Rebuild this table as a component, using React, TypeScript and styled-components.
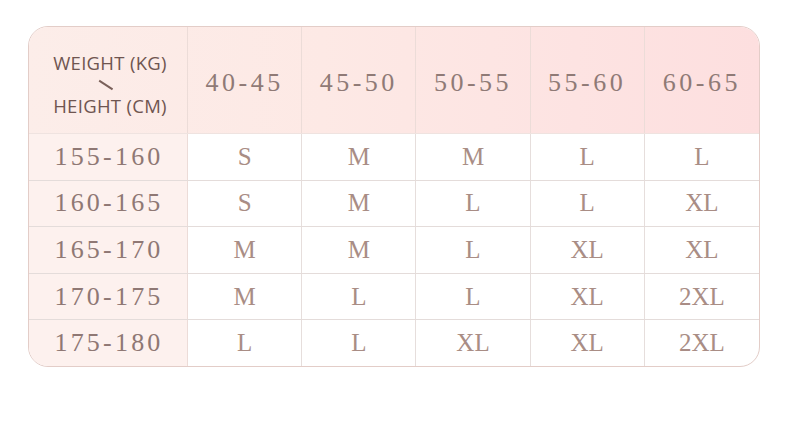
import React from 'react';
import styled, { createGlobalStyle } from 'styled-components';

const weights = ['40-45', '45-50', '50-55', '55-60', '60-65'];

const rows: { height: string; sizes: string[] }[] = [
	{ height: '155-160', sizes: ['S', 'M', 'M', 'L', 'L'] },
	{ height: '160-165', sizes: ['S', 'M', 'L', 'L', 'XL'] },
	{ height: '165-170', sizes: ['M', 'M', 'L', 'XL', 'XL'] },
	{ height: '170-175', sizes: ['M', 'L', 'L', 'XL', '2XL'] },
	{ height: '175-180', sizes: ['L', 'L', 'XL', 'XL', '2XL'] },
];

const App = () => {
	return (
		<>
			<GlobalStyle />
			<Page>
				<Chart>
					<HeadRow>
						<Corner>
							<span>WEIGHT (KG)</span>
							<Slash />
							<span>HEIGHT (CM)</span>
						</Corner>
						{weights.map((w) => (
							<HeadCell key={w}>{w}</HeadCell>
						))}
					</HeadRow>
					{rows.map((row, i) => (
						<BodyRow key={row.height} last={i === rows.length - 1}>
							<RowLabel>{row.height}</RowLabel>
							{row.sizes.map((s, j) => (
								<SizeCell key={j}>{s}</SizeCell>
							))}
						</BodyRow>
					))}
				</Chart>
			</Page>
		</>
	);
};

export default App;

const GlobalStyle = createGlobalStyle`
	html, body {
		margin: 0;
		padding: 0;
		background: #ffffff;
	}
`;

const Page = styled.div`
	width: 790px;
	height: 432px;
	padding: 26px 0 0 28px;
	box-sizing: border-box;
`;

const Chart = styled.div`
	width: 732px;
	height: 341px;
	box-sizing: border-box;
	border: 1px solid #e3cdc8;
	border-radius: 20px;
	overflow: hidden;
	display: flex;
	flex-direction: column;
	background: #ffffff;
`;

const grid = `
	display: grid;
	grid-template-columns: 159px repeat(5, 1fr);
`;

const HeadRow = styled.div`
	${grid}
	height: 107px;
	background: linear-gradient(90deg, #fcede9 0%, #fde9e5 40%, #fde3e2 75%, #fddfdf 100%);
	border-bottom: 1px solid #efe3e0;
	box-sizing: border-box;
`;

const Corner = styled.div`
	display: flex;
	flex-direction: column;
	align-items: center;
	justify-content: center;
	border-right: 1px solid #ecdcd8;
	font-family: 'Open Sans', 'Liberation Sans', sans-serif;
	font-size: 18.5px;
	color: #6f5550;
	letter-spacing: 0.3px;
	padding: 8px 0 0 4px;
	span {
		line-height: 20px;
	}
`;

const Slash = styled.div`
	width: 16px;
	height: 1.5px;
	background: #7a605a;
	transform: rotate(33deg);
	margin: 11.75px 0 9.75px -8px;
`;

const HeadCell = styled.div`
	display: flex;
	align-items: center;
	justify-content: center;
	border-right: 1px solid #ecdcd8;
	font-family: 'Liberation Serif', 'DejaVu Serif', serif;
	font-size: 26px;
	letter-spacing: 3.5px;
	color: #8f7a76;
	padding-top: 6px;
	&:last-child {
		border-right: none;
	}
`;

const BodyRow = styled.div<{ last: boolean }>`
	${grid}
	flex: 1;
	border-bottom: ${(p) => (p.last ? 'none' : '1px solid #e4dcda')};
`;

const RowLabel = styled.div`
	display: flex;
	align-items: center;
	justify-content: center;
	background: #fdf1ee;
	border-right: 1px solid #ecdcd8;
	font-family: 'Liberation Serif', 'DejaVu Serif', serif;
	font-size: 26px;
	letter-spacing: 3.2px;
	color: #8f7874;
	padding-left: 2px;
`;

const SizeCell = styled.div`
	display: flex;
	align-items: center;
	justify-content: center;
	border-right: 1px solid #e6dedc;
	font-family: 'Liberation Serif', serif;
	font-size: 25px;
	color: #a98d85;
	&:last-child {
		border-right: none;
	}
`;
